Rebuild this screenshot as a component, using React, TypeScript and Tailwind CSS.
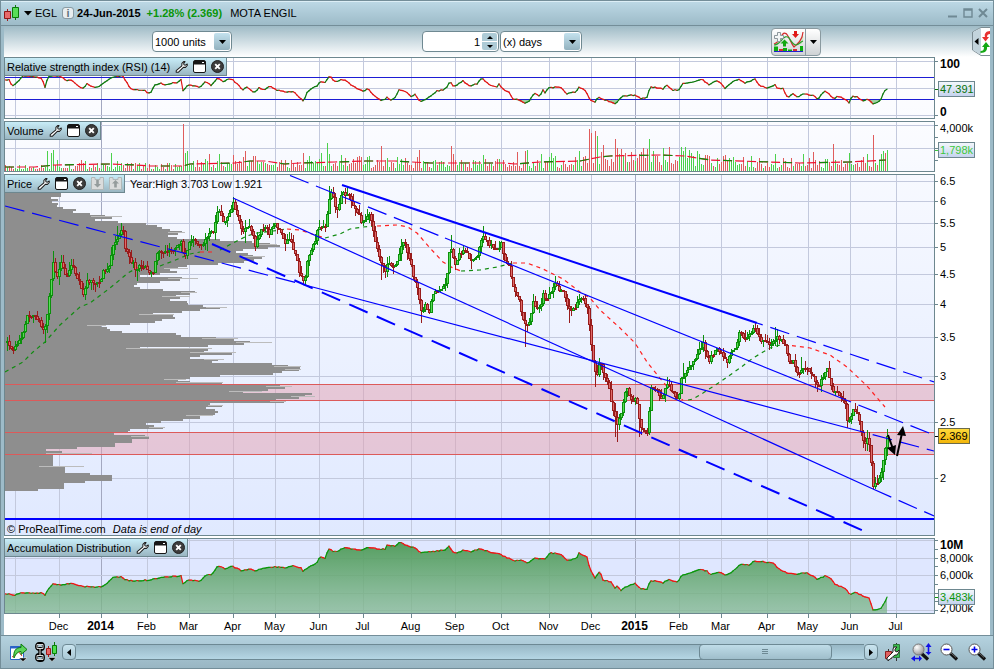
import type { ReactNode } from 'react';

type Point = [number, number];

const UP = '#128c12';
const DOWN = '#ff2020';
const GRID = '#c3c9dd';
const FRAME = '#6d878f';
const TREND = '#0000ff';

const MONTHS: [number, string][] = [
  [59, 'Dec'], [101, '2014'], [147, 'Feb'], [189, 'Mar'], [233, 'Apr'], [275, 'May'], [319, 'Jun'],
  [363, 'Jul'], [411, 'Aug'], [455, 'Sep'], [501, 'Oct'], [549, 'Nov'], [591, 'Dec'], [635, '2015'],
  [679, 'Feb'], [721, 'Mar'], [767, 'Apr'], [808, 'May'], [850, 'Jun'], [896, 'Jul'],
];

const RSI: Point[] = [
  [5, 80], [9, 80], [12, 86], [18, 82], [23, 76], [38, 77], [42, 79], [45, 87], [47, 80], [49, 76], [60, 76], [67, 81],
  [70, 79], [76, 84], [82, 89], [87, 84], [92, 87], [99, 87], [103, 83], [112, 77], [123, 76], [127, 83], [131, 89],
  [138, 90], [144, 90], [148, 93], [151, 92], [155, 85], [161, 83], [165, 85], [172, 83], [176, 83], [181, 80], [183, 91],
  [188, 85], [195, 86], [200, 87], [205, 82], [211, 85], [218, 78], [223, 82], [228, 79], [233, 80], [243, 90], [247, 87],
  [254, 93], [259, 88], [264, 90], [270, 86], [276, 90], [285, 92], [294, 92], [301, 99], [304, 101], [307, 92], [312, 88],
  [317, 86], [320, 82], [325, 82], [330, 76], [334, 82], [341, 80], [346, 80], [351, 85], [358, 89], [364, 91], [368, 88],
  [374, 96], [381, 100], [384, 100], [387, 97], [390, 100], [394, 99], [399, 90], [405, 91], [412, 97], [415, 94], [420, 102],
  [425, 100], [431, 96], [437, 91], [443, 90], [447, 87], [450, 81], [453, 86], [457, 85], [463, 81], [469, 86], [477, 84],
  [482, 78], [488, 84], [497, 87], [499, 84], [505, 91], [508, 91], [513, 99], [519, 100], [525, 103], [529, 101], [534, 93],
  [540, 96], [543, 90], [545, 93], [548, 88], [560, 87], [563, 90], [567, 94], [570, 92], [576, 93], [578, 87], [584, 89],
  [588, 95], [590, 100], [595, 102], [598, 97], [605, 100], [616, 104], [622, 96], [635, 95], [641, 99], [647, 97], [650, 87],
  [660, 88], [663, 89], [667, 85], [673, 90], [679, 90], [682, 84], [693, 82], [702, 79], [709, 85], [716, 81], [720, 82],
  [725, 88], [731, 83], [739, 79], [745, 83], [755, 79], [760, 86], [768, 88], [775, 85], [778, 89], [783, 88], [786, 96],
  [790, 97], [792, 93], [798, 97], [804, 94], [812, 95], [818, 99], [824, 91], [829, 94], [834, 99], [838, 96], [845, 99],
  [849, 103], [852, 96], [858, 97], [862, 101], [868, 99], [873, 104], [880, 101], [884, 92], [886, 89],
];

const CLOSES: Point[] = [
  [5, 343], [7, 343], [12, 349], [18, 343], [22, 336], [27, 317], [34, 315], [39, 319], [43, 331], [46, 322], [50, 290],
  [53, 262], [57, 278], [61, 264], [66, 280], [71, 265], [78, 280], [83, 296], [87, 281], [93, 282], [98, 284], [103, 272],
  [108, 268], [112, 250], [117, 237], [122, 226], [125, 248], [129, 258], [135, 268], [140, 266], [146, 265], [150, 276],
  [153, 272], [156, 253], [165, 251], [173, 248], [179, 245], [182, 240], [184, 262], [188, 245], [195, 240], [202, 248],
  [206, 235], [213, 232], [218, 210], [224, 223], [230, 212], [233, 203], [238, 219], [243, 234], [248, 222], [255, 245],
  [260, 233], [264, 225], [269, 234], [275, 223], [279, 230], [284, 243], [290, 239], [295, 255], [300, 275], [304, 283],
  [308, 255], [313, 245], [319, 225], [325, 228], [329, 197], [332, 190], [336, 210], [340, 200], [342, 188], [345, 196],
  [349, 195], [353, 207], [358, 213], [362, 224], [365, 222], [369, 213], [373, 230], [376, 245], [381, 265], [385, 270],
  [388, 258], [392, 270], [396, 265], [401, 245], [404, 240], [408, 255], [413, 275], [417, 287], [421, 312], [425, 305],
  [429, 312], [433, 295], [440, 288], [446, 280], [450, 245], [455, 265], [459, 255], [463, 249], [470, 260], [477, 255],
  [482, 235], [486, 240], [490, 245], [497, 250], [501, 242], [504, 262], [508, 262], [514, 290], [520, 305], [524, 325],
  [528, 324], [533, 303], [540, 310], [543, 295], [547, 300], [551, 290], [555, 283], [559, 289], [563, 293], [568, 310],
  [575, 308], [578, 297], [583, 300], [588, 311], [591, 345], [594, 368], [597, 373], [600, 360], [604, 375], [609, 389],
  [613, 410], [617, 425], [621, 415], [626, 388], [631, 398], [636, 400], [641, 430], [648, 432], [650, 390], [656, 388],
  [662, 400], [667, 382], [673, 392], [678, 402], [681, 378], [690, 367], [698, 352], [703, 343], [709, 362], [714, 350],
  [720, 350], [727, 362], [731, 352], [735, 350], [740, 330], [745, 340], [754, 328], [760, 340], [770, 343], [777, 338],
  [785, 345], [789, 363], [793, 358], [797, 375], [803, 368], [810, 370], [818, 387], [827, 370], [833, 392], [838, 395],
  [845, 405], [848, 425], [853, 408], [859, 420], [863, 442], [868, 440], [872, 470], [873, 488], [880, 478], [884, 455],
  [887, 438],
];

// long wicks: x -> y reached by the shadow
const WICKS: Record<number, number> = {
  45: 343, 53: 251, 117: 226, 121: 223, 137: 281, 207: 251, 233: 197, 245: 243, 257: 248, 305: 285, 329: 186,
  381: 280, 421: 323, 451: 235, 483: 226, 525: 347, 555: 276, 569: 323, 595: 387, 615: 437, 617: 442, 639: 437,
  683: 363, 775: 327, 801: 357, 847: 428, 867: 430, 873: 489,
};

// right edge of the volume-at-price rows, one row each 2px from y = 177
const PROFILE = [
  61, 60, 58, 60, 61, 59, 60, 61, 61, 61, 51, 58, 52, 58, 57, 63, 76, 73, 90, 105, 112, 95, 118, 146, 157, 162, 170, 182,
  178, 168, 177, 220, 252, 270, 280, 268, 243, 236, 248, 253, 262, 254, 244, 218, 187, 178, 170, 177, 160, 140, 182, 180,
  160, 137, 134, 140, 163, 195, 190, 176, 180, 170, 187, 188, 203, 220, 200, 182, 153, 173, 175, 162, 155, 130, 101, 107,
  110, 122, 176, 181, 216, 234, 250, 244, 208, 140, 208, 204, 232, 200, 190, 218, 212, 272, 288, 300, 299, 282, 273, 220,
  190, 178, 190, 222, 280, 285, 268, 243, 312, 305, 299, 276, 284, 210, 222, 206, 215, 218, 215, 200, 200, 183, 161, 146,
  154, 163, 130, 128, 114, 145, 149, 132, 132, 115, 115, 77, 46, 62, 60, 53, 53, 53, 53, 53, 53, 65, 65, 65, 90, 112, 112,
  112, 85, 64, 64, 64, 38,
];
// rows whose thin tip sticks out past the body
const TIPS: Point[] = [
  [216, 122], [232, 185], [244, 277], [256, 265], [268, 188], [278, 198], [292, 197], [296, 190], [307, 227], [314, 174],
  [325, 106], [338, 238], [342, 272], [348, 212], [352, 236], [359, 224], [366, 301], [369, 301], [379, 186], [382, 223],
  [386, 292], [391, 262], [396, 315], [401, 286], [405, 223], [415, 213], [427, 165], [436, 149], [453, 92], [466, 84],
];

const VOLUME_PEAKS: Record<number, [number, string]> = {
  47: [151, 'u'], 51: [153, 'u'], 53: [150, 'u'], 57: [160, 'u'], 81: [160, 'd'], 111: [153, 'u'], 183: [124, 'd'],
  185: [153, 'u'], 187: [151, 'u'], 209: [154, 'd'], 219: [154, 'u'], 233: [155, 'd'], 245: [151, 'd'], 255: [156, 'd'],
  303: [153, 'd'], 309: [156, 'u'], 321: [153, 'u'], 327: [143, 'u'], 329: [154, 'u'], 341: [155, 'u'], 381: [146, 'd'],
  419: [150, 'd'], 451: [146, 'd'], 453: [154, 'd'], 483: [155, 'u'], 517: [152, 'd'], 525: [151, 'd'], 527: [150, 'u'],
  541: [154, 'u'], 551: [153, 'u'], 579: [151, 'u'], 589: [129, 'd'], 591: [133, 'd'], 595: [131, 'd'], 597: [136, 'u'],
  603: [145, 'd'], 615: [139, 'd'], 617: [148, 'd'], 621: [149, 'd'], 625: [153, 'd'], 649: [139, 'u'], 653: [151, 'u'],
  681: [147, 'u'], 705: [155, 'd'], 775: [154, 'u'], 803: [154, 'u'], 813: [152, 'd'], 833: [144, 'd'], 849: [153, 'u'],
  867: [154, 'u'], 873: [135, 'd'], 881: [154, 'u'], 883: [151, 'u'], 885: [153, 'd'], 887: [150, 'u'],
};

const VOLUME_AVG: Point[] = [
  [5, 167], [35, 167], [55, 165], [110, 164], [135, 165], [150, 166], [183, 166], [190, 164], [235, 163], [250, 161],
  [265, 161], [285, 164], [300, 163], [335, 162], [365, 161], [395, 161], [430, 163], [505, 163], [515, 164], [540, 162],
  [580, 161], [600, 157], [610, 156], [660, 155], [685, 156], [710, 160], [770, 162], [800, 163], [850, 162], [886, 160],
];

const PRICE_AVG: [string, string][] = [
  [UP, '5,372 23,362 33,352 45,342 60,325 80,307 90,303 110,288 128,273 137,268'],
  [DOWN, '137,268 147,266 152,266'],
  [UP, '160,266 173,261 190,254 200,252'],
  [DOWN, '200,252 212,252'],
  [UP, '220,250 233,243 247,236 257,233 273,231 287,229'],
  [DOWN, '287,229 300,230 315,235 325,238'],
  [UP, '325,238 340,234 350,229 363,227 377,226'],
  [DOWN, '377,226 397,225 408,227 417,233 430,248 443,262 453,268 461,271'],
  [UP, '461,271 480,270 497,267 513,263'],
  [DOWN, '513,263 527,263 543,269 563,279 580,292 590,298 600,310 620,328 635,343 647,362 663,382 677,397 683,400'],
  [UP, '688,400 693,399 703,393 720,382 740,368 753,358 770,348 780,345'],
  [DOWN, '784,345 787,345 810,348 830,355 847,367 867,386 885,407'],
];

const ACC_DIST: Point[] = [
  [5, 594], [15, 595], [22, 593], [42, 593], [45, 595], [48, 589], [53, 584], [63, 585], [71, 583], [80, 586], [90, 587],
  [101, 587], [107, 583], [113, 577], [122, 577], [126, 580], [134, 581], [150, 580], [163, 577], [181, 576], [183, 584],
  [188, 580], [200, 581], [205, 576], [212, 574], [218, 566], [226, 569], [232, 566], [242, 571], [250, 569], [255, 571],
  [264, 568], [275, 567], [285, 568], [293, 566], [301, 568], [303, 571], [310, 566], [316, 564], [320, 557], [325, 558],
  [328, 550], [330, 549], [333, 552], [338, 551], [346, 547], [351, 549], [361, 550], [368, 547], [377, 549], [385, 549],
  [387, 545], [395, 546], [400, 542], [408, 546], [416, 548], [420, 553], [430, 552], [445, 550], [449, 546], [453, 552],
  [458, 553], [464, 550], [470, 552], [480, 549], [490, 552], [501, 554], [503, 556], [515, 561], [522, 560], [528, 563],
  [534, 558], [545, 559], [550, 553], [560, 554], [567, 560], [576, 559], [579, 553], [587, 557], [590, 569], [595, 578],
  [600, 571], [603, 580], [611, 582], [615, 588], [618, 586], [620, 591], [625, 587], [631, 585], [635, 583], [640, 589],
  [647, 589], [650, 581], [658, 581], [663, 583], [669, 579], [676, 582], [680, 580], [681, 576], [690, 573], [700, 569],
  [707, 571], [710, 575], [720, 572], [726, 575], [734, 571], [740, 564], [749, 565], [754, 561], [765, 562], [773, 563],
  [779, 569], [787, 573], [797, 574], [808, 573], [817, 579], [825, 576], [832, 579], [834, 584], [845, 588], [850, 595],
  [855, 592], [863, 596], [869, 598], [873, 610], [880, 609], [884, 604], [887, 597],
];

function valueAt(points: Point[], x: number) {
  const i = points.findIndex((p) => p[0] >= x);
  if (i <= 0) return points[i === 0 ? 0 : points.length - 1][1];
  const [x0, y0] = points[i - 1];
  const [x1, y1] = points[i];
  return y0 + ((y1 - y0) * (x - x0)) / (x1 - x0);
}

// repeatable noise in 0..1
function noise(n: number) {
  const v = Math.sin(n * 12.9898) * 43758.5453;
  return v - Math.floor(v);
}

const XS = Array.from({ length: 441 }, (_, i) => 7 + i * 2);

const CANDLES = XS.map((x) => {
  const close = Math.round(valueAt(CLOSES, x) + (noise(x) - 0.5) * 5);
  const open = Math.round(valueAt(CLOSES, x - 2) + (noise(x - 2) - 0.5) * 5);
  const top = Math.min(open, close);
  const bottom = Math.max(open, close, top + 2);
  let high = top - Math.round(noise(x + 0.3) ** 2 * 8);
  let low = bottom + Math.round(noise(x + 0.7) ** 2 * 8);
  const wick = WICKS[x];
  if (wick !== undefined) {
    high = Math.min(high, wick);
    low = Math.max(low, wick);
  }
  return { x, top, bottom, high, low, up: close < open };
});

function PlotSvg({ top, height, lines, children }: { top: number; height: number; lines: number[]; children: ReactNode }) {
  return (
    <svg viewBox={`5 ${top} 929 ${height}`} preserveAspectRatio="none" className="absolute inset-0 h-full w-full" aria-hidden="true">
      <g stroke={GRID} shapeRendering="crispEdges">
        {[15, ...MONTHS.map((m) => m[0])].map((x) => (
          <line key={x} x1={x + 0.5} x2={x + 0.5} y1={top} y2={top + height} stroke={x === 101 || x === 635 ? '#a3a8c0' : GRID} />
        ))}
        {lines.map((y) => (
          <line key={y} x1={5} x2={934} y1={y + 0.5} y2={y + 0.5} />
        ))}
      </g>
      {children}
    </svg>
  );
}

function ColouredLine({ points, up, down }: { points: Point[]; up: string; down: string }) {
  const xs = Array.from({ length: 441 }, (_, i) => 5 + i * 2);
  const y = (x: number) => valueAt(points, x) + (noise(x * 3) - 0.5);
  return (
    <g strokeWidth={1.2}>
      {xs.map((x) => {
        const a = y(x);
        const b = y(x + 2);
        return <line key={x} x1={x} y1={a} x2={x + 2} y2={b} strokeLinecap="round" stroke={b <= a ? up : down} />;
      })}
    </g>
  );
}

interface AxisLabel {
  y: number;
  text: string;
  bold?: boolean;
}

interface AxisProps {
  top: number;
  height: number;
  ticks: number[];
  labels: AxisLabel[];
  tag: { y: number; text: string; width: number; color: string; yellow?: boolean };
}

function Axis({ top, height, ticks, labels, tag }: AxisProps) {
  const pct = (y: number) => `${((y - top) / height) * 100}%`;
  return (
    <svg className="h-auto w-[55px] shrink-0 overflow-visible text-[11px]">
      {ticks.map((y) => (
        <line key={y} x1={0} x2={3} y1={pct(y + 0.5)} y2={pct(y + 0.5)} stroke={FRAME} />
      ))}
      {labels.map((l) => (
        <text key={l.text} x={5} y={pct(l.y)} dy={4} className={l.bold ? 'text-[12px] font-bold' : ''}>
          {l.text}
        </text>
      ))}
      <svg y={pct(tag.y)} overflow="visible">
        <line x1={0} x2={4} y1={0.5} y2={0.5} stroke={tag.yellow ? '#000' : tag.color} />
        <rect x={3.5} y={-7.5} width={tag.width} height={15} fill={tag.yellow ? 'url(#tagYellow)' : 'url(#tagBlue)'} stroke={tag.yellow ? '#6b6b4a' : FRAME} />
        <text x={5} y={4} fill={tag.color}>
          {tag.text}
        </text>
      </svg>
    </svg>
  );
}

function Wrench() {
  return (
    <svg width="13" height="14" viewBox="0 0 14 14" aria-hidden="true">
      <path d="M9.3 1.2 7.4 3.2v2.5L1.3 11v1.7h2.2L9 7.4h2.3l1.9-2V3.8l-2 1.2-1.6-.4-.2-1.5 1.4-1.9Z" fill="#fff" stroke="#1c1c1c" strokeWidth="1.1" strokeLinejoin="round" />
    </svg>
  );
}

function WindowIcon() {
  return (
    <svg width="13" height="13" viewBox="0 0 13 13" aria-hidden="true">
      <rect x="0.5" y="0.5" width="12" height="12" rx="1.5" fill="#fff" stroke="#161616" />
      <path d="M1 1h11v3.5H1z" fill="#161616" />
      <path d="M9 2.5h2" stroke="#fff" />
    </svg>
  );
}

function CloseIcon() {
  return (
    <svg width="13" height="13" viewBox="0 0 13 13" aria-hidden="true">
      <circle cx="6.5" cy="6.5" r="6" fill="#3c3c3c" stroke="#222" />
      <path d="m4.2 4.2 4.6 4.6m0-4.6L4.2 8.8" stroke="#fff" strokeWidth="1.9" />
    </svg>
  );
}

function MoveIcon({ up }: { up?: boolean }) {
  return (
    <svg width="13" height="13" viewBox="0 0 13 13" aria-hidden="true">
      <path d="M.5 2.5V.5H4v2h5v-2h3.5v12H.5z" fill="#dadcdc" stroke="#b1b8b8" />
      <path d={up ? 'M6.500 3 10 6.500H7.800v4H5.200v-4H3Z' : 'M6.500 10.500 3 7h2.200V3h2.600v4H10Z'} fill="#949c9c" />
    </svg>
  );
}

function PanelTab({ title, movable }: { title: string; movable?: boolean }) {
  return (
    <div className="absolute -left-px -top-px flex h-[19px] items-center gap-[5px] border border-[#6d878f] bg-gradient-to-b from-[#c8edf8] to-[#9ab6c2] px-0.5">
      <h2 className="whitespace-nowrap">{title}</h2>
      <button aria-label={`${title} settings`}><Wrench /></button>
      <button aria-label={`Detach ${title}`}><WindowIcon /></button>
      <button aria-label={`Close ${title}`}><CloseIcon /></button>
      {movable && (
        <>
          <button aria-label="Move down"><MoveIcon /></button>
          <button aria-label="Move up"><MoveIcon up /></button>
        </>
      )}
    </div>
  );
}

function TitleBar() {
  return (
    <header className="flex h-[26px] shrink-0 items-center border-y border-[#748e99] bg-gradient-to-b from-[#bdd9e6] to-[#9dbbc8] pl-[3px] pr-[5px] shadow-[inset_0_1px_0_#dceef6]">
      <svg width="16" height="16" viewBox="0 0 16 16" aria-hidden="true">
        <path d="M3.500 4v12" stroke="#a01c1c" />
        <path d="M.5 6.500h6v7h-6z" fill="#e86a6a" stroke="#8e1818" />
        <path d="M11.500 0v15" stroke="#0a7a0a" />
        <path d="M8.500 2.500h6v10h-6z" fill="#58dd58" stroke="#0a7a0a" />
      </svg>
      <button aria-label="Instrument menu" className="ml-1">
        <svg width="8" height="5" viewBox="0 0 8 5"><path d="M0 0h8L4 4.500Z" /></svg>
      </button>
      <span className="ml-[3px]">EGL</span>
      <button aria-label="Instrument information" className="ml-1.5 flex h-2.5 w-2.5 items-center justify-center rounded-xs bg-[#e8eef0] font-bold leading-3 text-[#62747c] outline outline-[#8a9ca4]">
        i
      </button>
      <strong className="ml-1">24-Jun-2015</strong>
      <strong className="ml-1.5 text-[#0a960a]">+1.28% (2.369)</strong>
      <h1 className="ml-2">MOTA ENGIL</h1>
      <div className="ml-auto flex items-center gap-[5px] text-[#6f8994]">
        <button aria-label="Minimise">
          <svg width="10" height="10" viewBox="0 0 10 10"><path d="M0 8.500h9" stroke="currentColor" strokeWidth="2" /></svg>
        </button>
        <button aria-label="Maximise">
          <svg width="10" height="10" viewBox="0 0 10 10"><path d="M1 1h8v8H1zM1 2h8" fill="none" stroke="currentColor" strokeWidth="1.4" /></svg>
        </button>
        <button aria-label="Close window">
          <svg width="10" height="10" viewBox="0 0 10 10"><path d="m1 1 8 8m0-8L1 9" stroke="currentColor" strokeWidth="2" /></svg>
        </button>
      </div>
    </header>
  );
}

function SelectBox({ label, option, width }: { label: string; option: string; width: string }) {
  return (
    <div className={`relative h-[21px] ${width}`}>
      <select aria-label={label} className="h-full w-full appearance-none rounded-sm border border-[#6f8992] bg-white pl-0.5">
        <option>{option}</option>
      </select>
      <span className="pointer-events-none absolute right-0.5 top-0.5 flex h-[17px] w-4 items-center justify-center rounded-xs bg-gradient-to-b from-[#c4e2ee] to-[#93b2bf]">
        <svg width="7" height="4" viewBox="0 0 7 4"><path d="M0 0h7L3.500 4Z" /></svg>
      </span>
    </div>
  );
}

function IndicatorIcon() {
  return (
    <svg width="31" height="22" viewBox="0 0 31 22" aria-hidden="true">
      <path d="M16 6c2 4 4 8 5 10 3-3 5-4 7-7l2-6c1 4 0 8-1 10-3 0-5 1-8 1-3-1-4-5-5-8Z" fill="#cfe9c9" />
      <path d="M1 13c3-1 5-3 7-7 2-5 5-5 7-1 2 3 4 9 6 11 2-2 6-4 8-10l1-5" fill="none" stroke="#d42a2a" strokeWidth="1.200" />
      <path d="M1 14c3 0 5-2 7-4 3-5 6-5 8-3 2 3 4 7 7 7 3 0 4-3 7-4" fill="none" stroke="#2a9e2a" strokeWidth="1.200" />
      <path d="M4.500 1.500h3v3h3v3h-3v3h-3v-3h-3v-3h3Z" fill="#f4f6f6" stroke="#8d979c" />
      <path d="m11.500 8.500-4 4h2.500v3h3v-3h2.500Z" fill="#12a812" />
      <path d="m22.500 7-3.500-4h2V0h3v3h2Z" fill="#e01818" />
      <path d="M1 15.500h4V20H1zM10 17h4v3h-4zM15 18.500h4V20h-4zM27 15h3v5h-3z" fill="#0cae0c" />
      <path d="M6 18h4v2H6zM20 18h4v2h-4z" fill="#d63030" />
      <path d="M1 20.500h29" stroke="#2020d0" />
    </svg>
  );
}

function Toolbar() {
  return (
    <div className="flex h-[31px] shrink-0 items-center bg-gradient-to-b from-[#9fbbc6] via-[#cfdde3] to-white">
      <div className="ml-[148px]">
        <SelectBox label="Number of units" option="1000 units" width="w-20" />
      </div>
      <div className="ml-[190px] flex gap-px">
        <div className="relative h-[21px] w-[77px]">
          <input aria-label="Bar period" defaultValue="1" className="h-full w-full rounded-sm border border-[#6f8992] bg-white pr-[18px] text-right" />
          <div className="absolute right-0.5 top-0.5 flex flex-col gap-px">
            <button aria-label="Increase" className="flex h-2 w-[15px] items-center justify-center rounded-t-xs bg-[#aecbd6]">
              <svg width="6" height="3" viewBox="0 0 6 3"><path d="M0 3h6L3 0Z" /></svg>
            </button>
            <button aria-label="Decrease" className="flex h-2 w-[15px] items-center justify-center rounded-b-xs bg-[#aecbd6]">
              <svg width="6" height="3" viewBox="0 0 6 3"><path d="M0 0h6L3 3Z" /></svg>
            </button>
          </div>
        </div>
        <SelectBox label="Period unit" option="(x) days" width="w-[82px]" />
      </div>
      <div className="ml-auto mr-[151px] flex h-7 rounded-sm border border-[#8a9aa0] bg-gradient-to-b from-white to-[#cfd3d5]">
        <button aria-label="Add indicator" className="flex w-[34px] items-center justify-center border-r border-[#8a9aa0]"><IndicatorIcon /></button>
        <button aria-label="Indicator menu" className="flex w-3.5 items-center justify-center">
          <svg width="7" height="4" viewBox="0 0 7 4"><path d="M0 0h7L3.500 4Z" /></svg>
        </button>
      </div>
      <button aria-label="Open trading panel">
        <svg width="18" height="31" viewBox="0 0 18 31">
          <path d="M18 1.500H9L.5 6v18L9 29.500h9" fill="#fff" stroke="#7d8d94" />
          <path d="M1 6 9 2v27l-8-5Z" fill="#c3d4dc" />
          <path d="M2.500 15.500 6.500 12v7Z" />
          <path d="M18 5c-4 0-6 3-5 6h-3l3.500 4.500L17 11h-2c0-2 1-3 3-3Z" fill="#e83030" />
          <path d="M8.500 27c5 0 7-3 6.500-6h3l-4-5-4 5h2c0 3-1 4-3.500 4Z" fill="#14a814" />
        </svg>
      </button>
    </div>
  );
}

function RsiPanel() {
  return (
    <section className="flex h-[62px] shrink-0">
      <div className="relative min-w-0 flex-1 border border-[#6d878f] bg-gradient-to-b from-white to-[#fafbff]">
        <PlotSvg top={58} height={60} lines={[61, 88, 115]}>
          <path d="M5 77.500h929M5 99.500h929" stroke="#1c1cd4" shapeRendering="crispEdges" />
          <path d="M516 100h16l-4 2-4 1Zm90 0h12l-3 4Zm262 0h12l-3 2-5 2Z" fill="#9fcf9f" />
          <ColouredLine points={RSI} up="#0c780c" down="#e01414" />
        </PlotSvg>
        <PanelTab title="Relative strength index (RSI) (14)" />
      </div>
      <Axis
        top={57}
        height={62}
        ticks={[61, 115]}
        labels={[{ y: 64, text: '100', bold: true }, { y: 112, text: '0', bold: true }]}
        tag={{ y: 89, text: '47.391', width: 36, color: '#0a720a' }}
      />
    </section>
  );
}

function VolumePanel() {
  return (
    <section className="flex h-[51px] shrink-0">
      <div className="relative min-w-0 flex-1 border border-[#6d878f] bg-gradient-to-b from-[#fbfcff] to-[#f7f9ff]">
        <PlotSvg top={122} height={49} lines={[125, 148]}>
          <g shapeRendering="crispEdges">
            {[5, ...XS].map((x) => {
              const peak = VOLUME_PEAKS[x];
              const level = (171 - valueAt(VOLUME_AVG, x)) * 1.1;
              const y = peak ? peak[0] : Math.round(171 - level * (0.3 + noise(x + 11) ** 1.3 * 1.15));
              const up = peak ? peak[1] === 'u' : CANDLES[(x - 7) / 2]?.up;
              return <rect key={x} x={x} y={y} width={1} height={171 - y} fill={up ? '#4cd24c' : '#e05c5c'} />;
            })}
          </g>
          <polyline points={VOLUME_AVG.join(' ')} fill="none" stroke="#f01030" strokeWidth={1.2} strokeDasharray="9 3" />
          <polyline points={VOLUME_AVG.join(' ')} fill="none" stroke="#0a8c0a" strokeWidth={1.2} strokeDasharray="9 27 9 15" />
        </PlotSvg>
        <PanelTab title="Volume" />
      </div>
      <Axis
        top={121}
        height={51}
        ticks={[125, 137, 148, 160]}
        labels={[{ y: 128, text: '4,000k' }]}
        tag={{ y: 150, text: '1,798k', width: 36, color: '#3cc83c' }}
      />
    </section>
  );
}

function PricePanel() {
  return (
    <section className="flex min-h-[362px] flex-1">
      <div className="relative min-w-0 flex-1 border border-[#6d878f] bg-gradient-to-b from-[#f7f9ff] to-[#e0e9ff]">
        <PlotSvg top={175} height={360} lines={[181, 201, 223, 247, 274, 304, 337, 376, 422, 478]}>
          <g fill="#e4a0b0" fillOpacity={0.5}>
            <rect x={5} y={384} width={929} height={17} />
            <rect x={5} y={432} width={929} height={23} />
          </g>
          <g shapeRendering="crispEdges">
            <rect x={5} y={175} width={55} height={2} fill="#8e8e8e" />
            {PROFILE.map((right, i) => (
              <rect key={i} x={5} y={177 + i * 2} width={right - 5} height={2} fill="#8e8e8e" />
            ))}
            {TIPS.map(([y, right]) => {
              const row = PROFILE[Math.floor((y - 177) / 2)];
              return <rect key={y} x={row - 14} y={y} width={Math.max(8, right - row + 14)} height={1} fill="#bcbcbc" />;
            })}
            <path d="M5 384.500h929M5 400.500h929M5 432.500h929M5 454.500h929" stroke="#dc5a5a" />
            <rect x={5} y={518} width={929} height={2} fill={TREND} />
          </g>
          <g fill="none" strokeWidth={1.2} strokeDasharray="4 4">
            {PRICE_AVG.map(([color, points]) => (
              <polyline key={points} points={points} stroke={color} />
            ))}
          </g>
          <g shapeRendering="crispEdges">
            {CANDLES.map((c) => (
              <g key={c.x} fill={c.up ? '#0c900c' : '#981c1c'}>
                <rect x={c.x} y={c.high} width={1} height={c.low - c.high} />
                <rect x={c.x - 1} y={c.top} width={3} height={c.bottom - c.top} />
                {c.bottom - c.top > 2 && (
                  <rect x={c.x} y={c.top + 1} width={1} height={c.bottom - c.top - 2} fill={c.up ? '#58dc58' : '#e06a6a'} />
                )}
              </g>
            ))}
          </g>
          <g stroke={TREND} fill="none" strokeWidth={1.2}>
            <path d="M342 185 757 323" strokeWidth={2} />
            <path d="M757 323 934 382" strokeDasharray="20 8" strokeDashoffset={14} />
            <path d="M290 175.500 445 238" strokeDasharray="20 8" />
            <path d="M445 238 851 402" />
            <path d="M851 402 934 435" strokeDasharray="20 8" strokeDashoffset={20} />
            <path d="M233 198 873 489" />
            <path d="M873 489 934 516" strokeDasharray="20 8" />
            <path d="M5 206 305 285" strokeDasharray="20 8" />
            <path d="M305 285 863 432" />
            <path d="M863 432 934 451" strokeDasharray="20 8" strokeDashoffset={18} />
            <path d="M212 244 864 531" strokeWidth={2} strokeDasharray="20 10" />
          </g>
          <path d="M888 435 893 449M897 456 902 433" stroke="#000" strokeWidth={2} />
          <path d="m895 455-8-7 9-3ZM903 426l-6 9 9 1Z" />
        </PlotSvg>
        <PanelTab title="Price" movable />
        <p className="absolute left-[125px] top-px whitespace-nowrap">Year:High 3.703 Low 1.921</p>
        <p className="absolute bottom-0 left-0.5 whitespace-nowrap leading-3">
          © ProRealTime.com <em className="ml-1">Data is end of day</em>
        </p>
      </div>
      <Axis
        top={174}
        height={362}
        ticks={[181, 201, 223, 247, 274, 304, 337, 376, 422, 478]}
        labels={[
          { y: 181, text: '6.5' }, { y: 201, text: '6' }, { y: 223, text: '5.5' }, { y: 247, text: '5' }, { y: 274, text: '4.5' },
          { y: 304, text: '4' }, { y: 337, text: '3.5' }, { y: 376, text: '3' }, { y: 422, text: '2.5' }, { y: 478, text: '2' },
        ]}
        tag={{ y: 436, text: '2.369', width: 31, color: '#000', yellow: true }}
      />
    </section>
  );
}

function AccDistPanel() {
  return (
    <section className="flex h-[76px] shrink-0">
      <div className="relative min-w-0 flex-1 border border-[#6d878f] bg-[#dfe7ff]">
        <PlotSvg top={539} height={74} lines={[540, 558, 575, 593, 610]}>
          <polygon points={`5,613 ${ACC_DIST.join(' ')} 887,613`} fill="url(#accFill)" />
          <ColouredLine points={ACC_DIST} up="#0a960a" down="#f01414" />
        </PlotSvg>
        <PanelTab title="Accumulation Distribution" />
      </div>
      <Axis
        top={538}
        height={76}
        ticks={[540, 549, 558, 566, 575, 584, 593, 601, 610]}
        labels={[{ y: 545, text: '10M', bold: true }, { y: 558, text: '8,000k' }, { y: 575, text: '6,000k' }, { y: 608, text: '2,000k' }]}
        tag={{ y: 597, text: '3,483k', width: 36, color: '#0a960a' }}
      />
    </section>
  );
}

function TimeAxis() {
  return (
    <div className="mr-[55px] h-[21px] shrink-0">
      <svg className="h-full w-full overflow-visible text-[11px]">
        {MONTHS.map(([x, label]) => {
          const at = `${((x - 3.5) / 931) * 100}%`;
          const year = label.startsWith('20');
          return (
            <g key={x}>
              <line x1={at} x2={at} y1={0} y2={4} stroke={FRAME} />
              <text x={at} y={16} dx={-1} textAnchor="middle" className={year ? 'text-[12px] font-bold' : ''}>{label}</text>
            </g>
          );
        })}
      </svg>
    </div>
  );
}

function Magnifier({ plus }: { plus?: boolean }) {
  return (
    <svg width="19" height="18" viewBox="0 0 19 18" aria-hidden="true">
      <path d="m10 10 7 6.500" stroke="#111" strokeWidth="3.200" />
      <path d="m11 10 5 4.500" stroke="#7c7c7c" strokeWidth="0.800" />
      <circle cx="6.500" cy="6.500" r="5.500" fill="#fff" stroke="#555" />
      <path d={plus ? 'M3.500 6.500h6M6.500 3.500v6' : 'M3.500 6.500h6'} stroke="#0000e8" strokeWidth="1.600" />
    </svg>
  );
}

function BottomBar() {
  return (
    <footer className="flex h-[34px] shrink-0 items-center border-y border-[#748e99] bg-gradient-to-b from-[#b4d2df] to-[#99b6c3] pl-2 pr-1.5">
      <button aria-label="Export chart">
        <svg width="19" height="19" viewBox="0 0 19 19">
          <path d="M1.500 3.500h13v13h-13z" fill="#fff" stroke="#2a62c8" />
          <path d="M1 4.500h11" stroke="#2a62c8" strokeWidth="2" />
          <path d="m3 14 3-2 3-4 4 5" stroke="#e03030" fill="none" />
          <path d="M5 15C4 8 7 4.500 12 4.500V1l6 5.500-6 5V8.500c-3 0-5 2-7 6.500Z" fill="#5cd45c" stroke="#0a7a0a" />
          <path d="M10 15h8l-4 3.500Z" stroke="#fff" strokeWidth="0.500" />
        </svg>
      </button>
      <button aria-label="Link charts" className="ml-[7px]">
        <svg width="24" height="20" viewBox="0 0 24 20">
          <rect x="1.500" y="1.500" width="7" height="6" rx="2.500" fill="none" stroke="#000" strokeWidth="2.800" />
          <rect x="1.500" y="12.500" width="7" height="6" rx="2.500" fill="none" stroke="#000" strokeWidth="2.800" />
          <path d="M5 5v10" stroke="#000" strokeWidth="3.500" />
          <path d="M2 2.500h6v4H2zM2 13.500h6v4H2zM5 6v8" fill="none" stroke="#eee" strokeWidth="0.900" />
          <path d="M13.500 4v11" stroke="#a01818" />
          <path d="M11.500 6.500h4v6h-4z" fill="#e86a6a" stroke="#a01818" />
          <path d="M19.500 0v14" stroke="#0a7a0a" />
          <path d="M17.500 3.500h4v8h-4z" fill="#4ee04e" stroke="#0a7a0a" />
          <path d="M13 15.500h8l-4 4Z" stroke="#fff" strokeWidth="0.500" />
        </svg>
      </button>
      <div className="ml-[3px] flex min-w-0 flex-1 items-center">
        <button aria-label="Scroll left" className="flex h-4 w-3.5 items-center justify-center rounded-sm border border-[#6d8994] bg-gradient-to-b from-[#c9e4ef] to-[#a9c8d5]">
          <svg width="4" height="7" viewBox="0 0 4 7"><path d="M4 0v7L0 3.500Z" /></svg>
        </button>
        <div className="flex h-4 min-w-0 flex-1 border-y border-[#6d8994] bg-gradient-to-b from-[#98b8c6] to-[#b5d6e4]">
          <div className="w-[79%]" />
          <button aria-label="Scroll position" className="-my-px flex w-[17%] items-center justify-center rounded-sm border border-[#6d8994] bg-gradient-to-b from-[#bfdce8] to-[#9fbecb]">
            <svg width="6" height="6" viewBox="0 0 6 6"><path d="M0 .5h6M0 2.500h6M0 4.500h6" stroke="#6d8994" /></svg>
          </button>
        </div>
        <button aria-label="Scroll right" className="flex h-4 w-3.5 items-center justify-center rounded-sm border border-[#6d8994] bg-gradient-to-b from-[#c9e4ef] to-[#a9c8d5]">
          <svg width="4" height="7" viewBox="0 0 4 7"><path d="M0 0v7l4-3.500Z" /></svg>
        </button>
      </div>
      <button aria-label="Chart settings" className="ml-[7px]">
        <svg width="16" height="18" viewBox="0 0 16 18">
          <path d="M11.500 0v18M3.500 6v12" stroke="#333" />
          <path d="M8.500 1.500h6v13h-6z" fill="#3cbc50" stroke="#2a7a3a" />
          <path d="M.5 8.500h6v7h-6z" fill="#e06060" stroke="#8a2020" />
          <path d="m9 4-1 2v3l-6 6v2h2l6-5h2l2-3V7l-2 2-2-1V6l2-2Z" fill="#fff" stroke="#222" />
        </svg>
      </button>
      <button aria-label="Fit chart" className="ml-[10px]">
        <svg width="21" height="19" viewBox="0 0 21 19">
          <path d="m10 10 7 6.500" stroke="#111" strokeWidth="3.200" />
          <circle cx="7.500" cy="6.500" r="5.500" fill="url(#lens)" stroke="#777" />
          <path d="M17.500 3v7M3 15.500h6" stroke="#1010e8" strokeWidth="1.600" />
          <path d="m17.500 0 3 4h-6ZM17.500 12l3-3h-6ZM0 15.500l4-3v6ZM11 15.500l-3-3v6Z" fill="#1010e8" />
        </svg>
      </button>
      <button aria-label="Zoom out" className="ml-2"><Magnifier /></button>
      <button aria-label="Zoom in" className="ml-[9px]"><Magnifier plus /></button>
    </footer>
  );
}

function SharedPaints() {
  return (
    <svg className="absolute h-0 w-0" aria-hidden="true">
      <defs>
        <linearGradient id="accFill" x1="0" y1="0" x2="0" y2="1">
          <stop offset="0" stopColor="#4d9a57" stopOpacity="0.950" />
          <stop offset="1" stopColor="#82b890" stopOpacity="0.750" />
        </linearGradient>
        <linearGradient id="tagBlue" x1="0" y1="0" x2="0" y2="1">
          <stop offset="0" stopColor="#f4f8fc" />
          <stop offset="1" stopColor="#c4d2ee" />
        </linearGradient>
        <linearGradient id="tagYellow" x1="0" y1="0" x2="0" y2="1">
          <stop offset="0" stopColor="#ffdc3c" />
          <stop offset="1" stopColor="#f2b408" />
        </linearGradient>
        <radialGradient id="lens" cx="0.350" cy="0.300" r="0.800">
          <stop offset="0" stopColor="#fff" />
          <stop offset="1" stopColor="#8c8c8c" />
        </radialGradient>
      </defs>
    </svg>
  );
}

export default function App() {
  return (
    <div className="flex min-h-screen flex-col border-x border-[#748e99] bg-[#9dbbc8] font-['Liberation_Sans',Arial,sans-serif] text-[11px] leading-4 text-black">
      <SharedPaints />
      <TitleBar />
      <main className="mx-[3px] flex flex-1 flex-col bg-white">
        <Toolbar />
        <div className="flex flex-1 flex-col gap-0.5">
          <RsiPanel />
          <VolumePanel />
          <PricePanel />
          <AccDistPanel />
        </div>
        <TimeAxis />
      </main>
      <BottomBar />
    </div>
  );
}
